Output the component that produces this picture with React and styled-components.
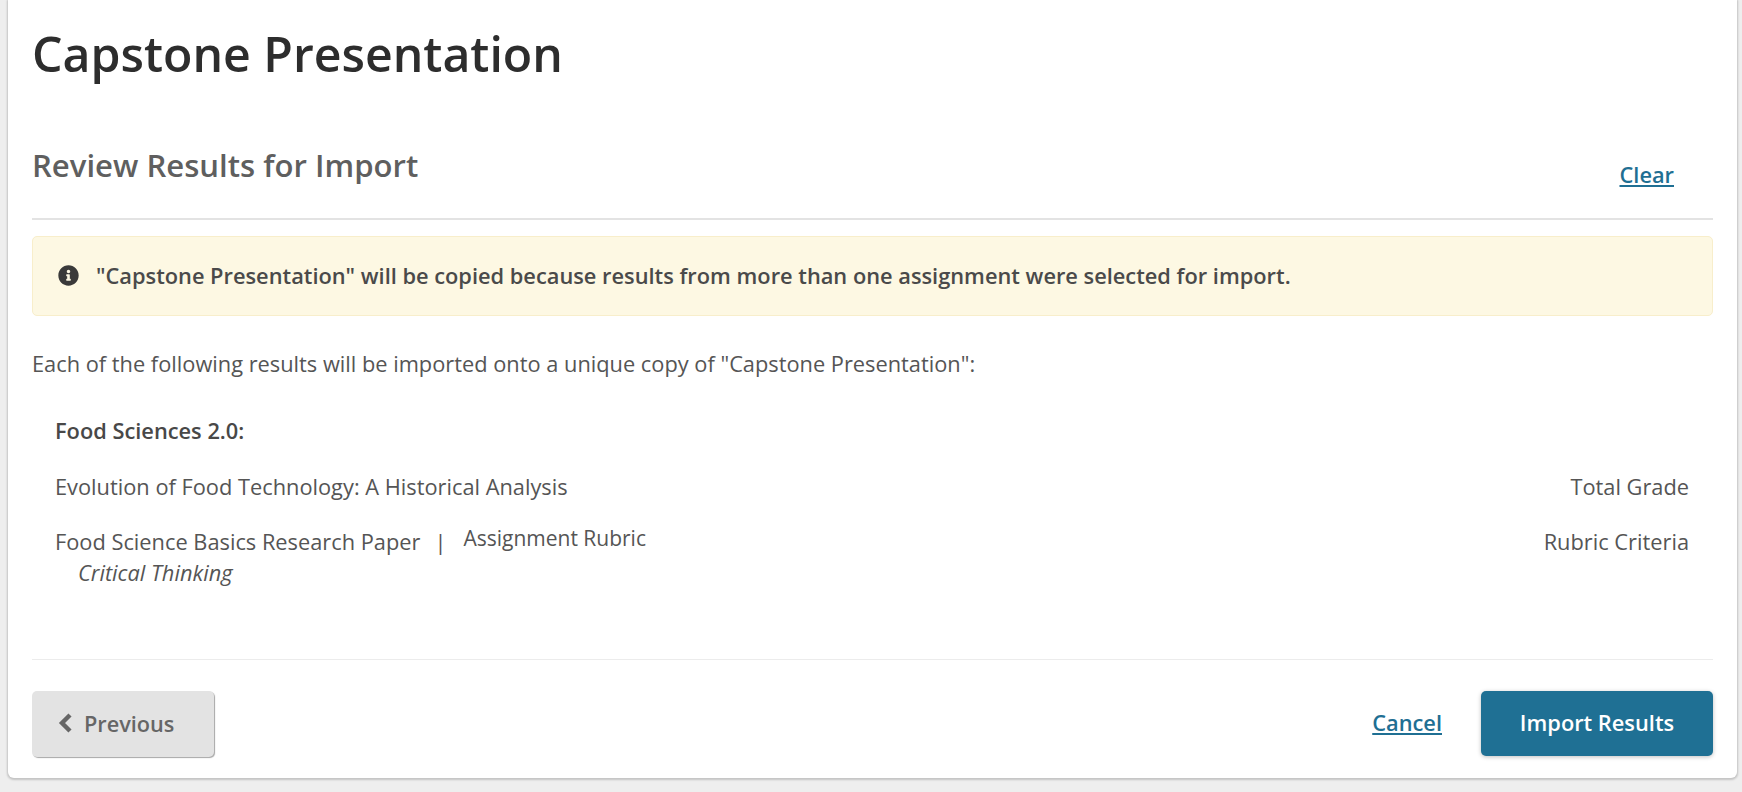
import React from "react";
import styled, { createGlobalStyle } from "styled-components";
import { FaInfoCircle } from "react-icons/fa";

const GlobalStyle = createGlobalStyle`
  html, body {
    margin: 0;
    background: #eeeeee;
    font-family: "Open Sans", "Noto Sans", sans-serif;
    color: #555555;
  }
`;

const Page = styled.div`
  width: 1742px;
  height: 792px;
  box-sizing: border-box;
  padding: 0 5px 14px 8px;
  overflow: hidden;
`;

const Card = styled.div`
  height: 100%;
  box-sizing: border-box;
  background: #fff;
  border-radius: 0 0 6px 6px;
  box-shadow: 0 1px 2px 1px rgba(0, 0, 0, 0.18);
  padding: 0 24px 21px;
  display: flex;
  flex-direction: column;
`;

const Title = styled.h1`
  margin: 0;
  padding-top: 22px;
  font-size: 48.2px;
  line-height: 62px;
  font-weight: 600;
  color: #2d2d2d;
`;

const SectionHeader = styled.div`
  margin-top: 63px;
  height: 73px;
  box-sizing: border-box;
  border-bottom: 2px solid #e3e3e3;
  display: flex;
  justify-content: space-between;
`;

const SectionTitle = styled.h2`
  margin: 0;
  font-size: 31.1px;
  line-height: 37px;
  font-weight: 600;
  color: #5f5f5f;
`;

const TextLink = styled.a`
  color: #1f6f93;
  font-size: 21.8px;
  font-weight: 600;
  text-decoration: underline;
  cursor: pointer;
`;

const ClearLink = styled(TextLink)`
  margin: 14px 39px 0 0;
  line-height: 27px;
`;

const Alert = styled.div`
  margin-top: 16px;
  height: 80px;
  box-sizing: border-box;
  background: #fdf8e3;
  border: 1px solid #f8eecb;
  border-radius: 5px;
  padding: 0 25px 2px;
  display: flex;
  align-items: center;
  gap: 17px;
  font-size: 21.8px;
  font-weight: 600;
  color: #4a4a4a;

  & svg {
    width: 21px;
    height: 21px;
    color: #3a3a3a;
    flex: none;
  }
`;

const Intro = styled.p`
  margin: 34px 0 0;
  font-size: 21.8px;
  line-height: 27px;
`;

const ResultList = styled.div`
  margin-top: 40px;
  padding: 0 24px 0 23px;
  flex: 1;
  font-size: 21.8px;
  line-height: 27px;
`;

const CourseName = styled.div`
  font-weight: 600;
  color: #484848;
  margin-bottom: 29px;
`;

const ResultRow = styled.div`
  display: flex;
  justify-content: space-between;
  margin-bottom: 28px;
`;

const ResultName = styled.div`
  display: flex;
  align-items: flex-start;
`;

const Divider = styled.span`
  margin: 0 17px 0 14px;
`;

const Rubric = styled.span`
  margin-top: -3px;
  font-size: 21px;
`;

const Criteria = styled.div`
  margin: 4px 0 0 23px;
  font-style: italic;
`;

const Footer = styled.div`
  border-top: 1px solid #ececec;
  padding-top: 31px;
  display: flex;
  justify-content: space-between;
  align-items: flex-start;
`;

const FooterActions = styled.div`
  display: flex;
  align-items: center;
  gap: 39px;
`;

const PreviousButton = styled.button`
  width: 182px;
  height: 66px;
  box-sizing: border-box;
  border: none;
  border-radius: 5px;
  background: #e3e3e3;
  box-shadow: 1px 1px 1px rgba(0, 0, 0, 0.35);
  color: #666666;
  font-family: inherit;
  font-size: 21.7px;
  font-weight: 600;
  display: flex;
  align-items: center;
  gap: 11px;
  padding: 0 0 2px 26px;
`;

const ImportButton = styled.button`
  width: 232px;
  height: 65px;
  border: none;
  border-radius: 5px;
  padding: 0 0 2px;
  background: #1f7094;
  box-shadow: 0 1px 4px rgba(0, 0, 0, 0.25);
  color: #fff;
  font-family: inherit;
  font-size: 21.8px;
  font-weight: 600;
`;

const CancelLink = styled(TextLink)`
  margin-bottom: 2px;
`;

const ChevronLeft = () => (
  <svg width="15" height="20" viewBox="0 0 15 20" aria-hidden="true">
    <path d="M12 2 4 10l8 8" fill="none" stroke="currentColor" strokeWidth="4.4" />
  </svg>
);

export default function App() {
  return (
    <Page>
      <GlobalStyle />
      <Card>
        <Title>Capstone Presentation</Title>
        <SectionHeader>
          <SectionTitle>Review Results for Import</SectionTitle>
          <ClearLink>Clear</ClearLink>
        </SectionHeader>
        <Alert>
          <FaInfoCircle />
          "Capstone Presentation" will be copied because results from more than one assignment were selected for import.
        </Alert>
        <Intro>Each of the following results will be imported onto a unique copy of "Capstone Presentation":</Intro>
        <ResultList>
          <CourseName>Food Sciences 2.0:</CourseName>
          <ResultRow>
            <div>Evolution of Food Technology: A Historical Analysis</div>
            <div>Total Grade</div>
          </ResultRow>
          <ResultRow>
            <div>
              <ResultName>
                Food Science Basics Research Paper
                <Divider>|</Divider>
                <Rubric>Assignment Rubric</Rubric>
              </ResultName>
              <Criteria>Critical Thinking</Criteria>
            </div>
            <div>Rubric Criteria</div>
          </ResultRow>
        </ResultList>
        <Footer>
          <PreviousButton>
            <ChevronLeft />
            Previous
          </PreviousButton>
          <FooterActions>
            <CancelLink>Cancel</CancelLink>
            <ImportButton>Import Results</ImportButton>
          </FooterActions>
        </Footer>
      </Card>
    </Page>
  );
}
